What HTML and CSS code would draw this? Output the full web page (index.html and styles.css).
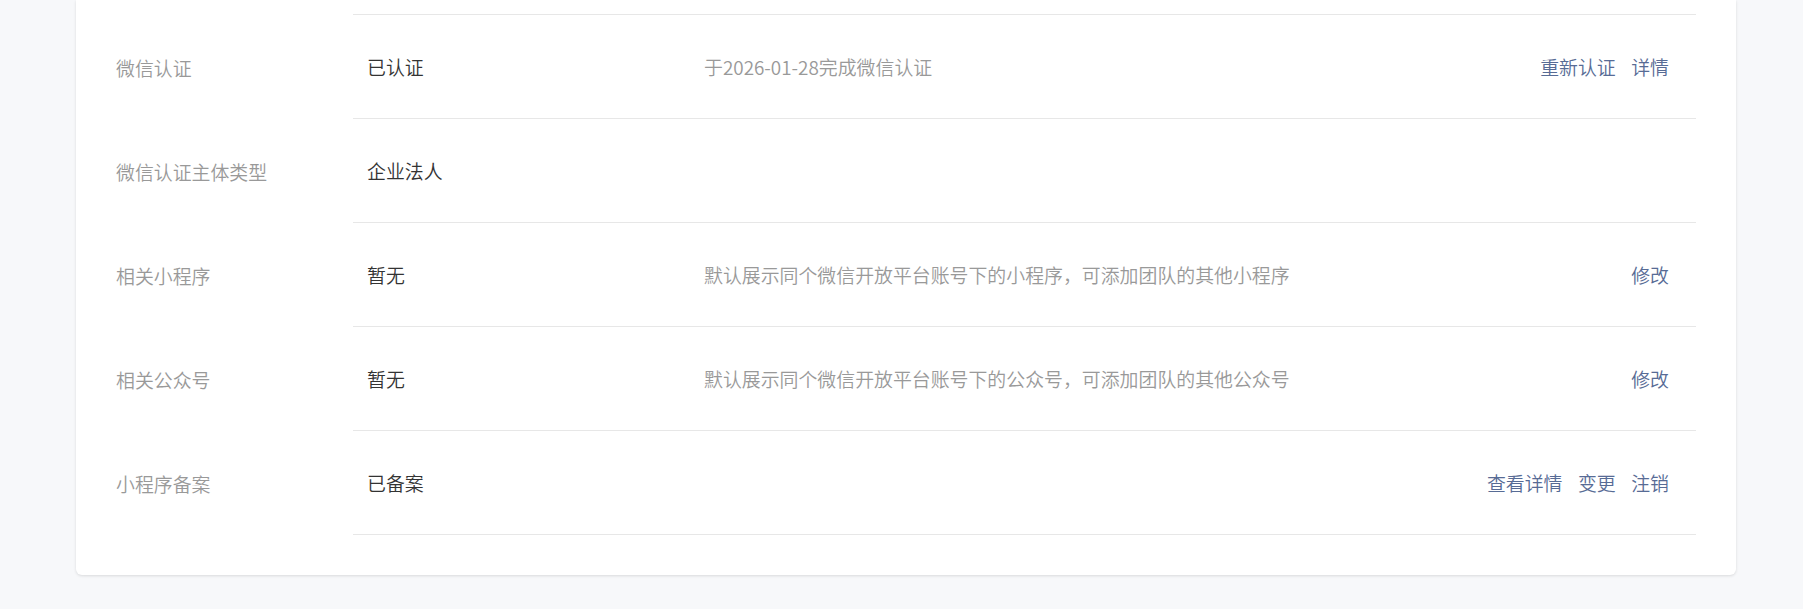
FILE: index.html
```html
<!DOCTYPE html>
<html lang="zh-CN">
<head>
  <meta charset="UTF-8" />
  <meta name="viewport" content="width=device-width, initial-scale=1.0"/>
  <title>账号设置</title>
  <link rel="stylesheet" href="styles.css">
</head>
<body>

<div class="card">
  <div class="info-list">
    <div class="info-row info-row-top">
      <div class="info-label"></div>
      <div class="info-body"></div>
    </div>

    <div class="info-row">
      <div class="info-label">微信认证</div>
      <div class="info-body">
        <div class="info-value">已认证</div>
        <div class="info-desc">于2026-01-28完成微信认证</div>
        <div class="info-actions">
          <a href="#">重新认证</a>
          <a href="#">详情</a>
        </div>
      </div>
    </div>

    <div class="info-row">
      <div class="info-label">微信认证主体类型</div>
      <div class="info-body">
        <div class="info-value">企业法人</div>
      </div>
    </div>

    <div class="info-row">
      <div class="info-label">相关小程序</div>
      <div class="info-body">
        <div class="info-value">暂无</div>
        <div class="info-desc">默认展示同个微信开放平台账号下的小程序，可添加团队的其他小程序</div>
        <div class="info-actions">
          <a href="#">修改</a>
        </div>
      </div>
    </div>

    <div class="info-row">
      <div class="info-label">相关公众号</div>
      <div class="info-body">
        <div class="info-value">暂无</div>
        <div class="info-desc">默认展示同个微信开放平台账号下的公众号，可添加团队的其他公众号</div>
        <div class="info-actions">
          <a href="#">修改</a>
        </div>
      </div>
    </div>

    <div class="info-row">
      <div class="info-label">小程序备案</div>
      <div class="info-body">
        <div class="info-value">已备案</div>
        <div class="info-desc"></div>
        <div class="info-actions">
          <a href="#">查看详情</a>
          <a href="#">变更</a>
          <a href="#">注销</a>
        </div>
      </div>
    </div>
  </div>
</div>

</body>
</html>
```

FILE: styles.css
```css
* {
  box-sizing: border-box;
}
body {
  font-family: "Noto Sans CJK SC", "Noto Sans", sans-serif;
  font-size: 18.9px;
  font-weight: 350;
  margin: 0;
  padding: 0 67px 35px 76px;
  background: #f7f8fa;
  color: #333;
}
.card {
  background: #ffffff;
  padding: 0 40px 40px 40px;
  border-radius: 0 0 6px 6px;
  box-shadow: 0 1px 3px rgba(0, 0, 0, 0.12);
}
.info-row {
  display: flex;
  height: 104px;
}
.info-row-top {
  height: 15px;
}
.info-label {
  width: 237px;
  flex-shrink: 0;
  display: flex;
  align-items: center;
  color: #999;
}
.info-body {
  flex: 1;
  display: flex;
  align-items: center;
  padding: 0 27px 0 14px;
  border-bottom: 1px solid #e7e7e7;
}
.info-value {
  width: 337px;
  flex-shrink: 0;
  color: #333;
}
.info-desc {
  flex: 1;
  color: #999;
}
.info-actions {
  display: flex;
  gap: 15.5px;
}
.info-actions a {
  color: #576b95;
  text-decoration: none;
}
```
